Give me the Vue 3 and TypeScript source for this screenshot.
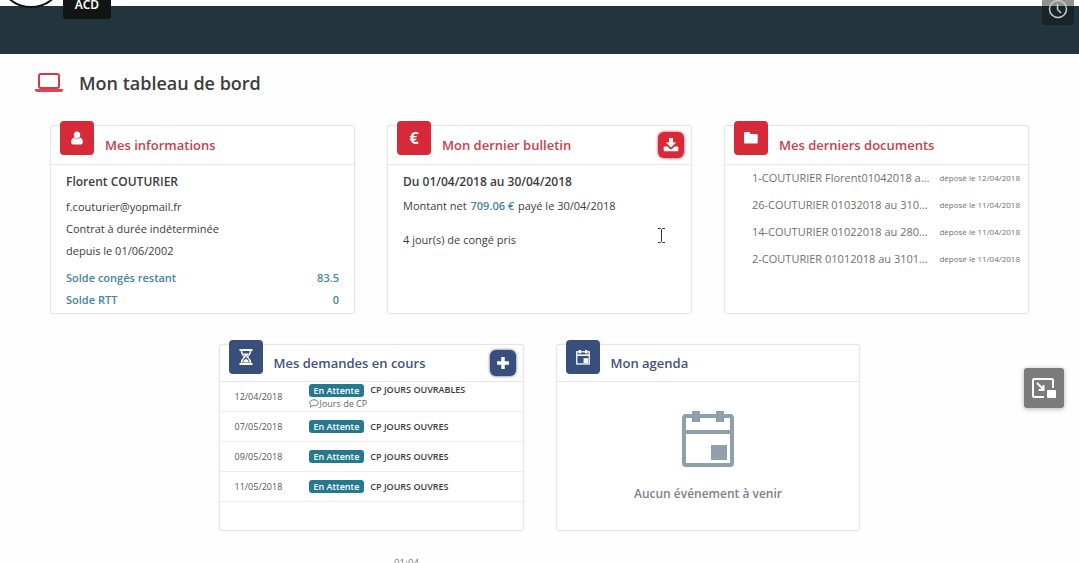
<script setup lang="ts">
interface DocumentRow {
  name: string
  date: string
}

interface RequestRow {
  date: string
  status: string
  label: string
  note?: string
}

const documents: DocumentRow[] = [
  { name: '1-COUTURIER Florent01042018 a...', date: '12/04/2018' },
  { name: '26-COUTURIER 01032018 au 310...', date: '11/04/2018' },
  { name: '14-COUTURIER 01022018 au 280...', date: '11/04/2018' },
  { name: '2-COUTURIER 01012018 au 3101...', date: '11/04/2018' },
]

const requests: RequestRow[] = [
  { date: '12/04/2018', status: 'En Attente', label: 'CP JOURS OUVRABLES', note: 'Jours de CP' },
  { date: '07/05/2018', status: 'En Attente', label: 'CP JOURS OUVRES' },
  { date: '09/05/2018', status: 'En Attente', label: 'CP JOURS OUVRES' },
  { date: '11/05/2018', status: 'En Attente', label: 'CP JOURS OUVRES' },
]
</script>

<template>
  <div class="page">
    <header class="topbar"></header>

    <svg class="avatar" viewBox="0 0 68 68" aria-hidden="true">
      <circle cx="34" cy="34" r="33" fill="#fff" stroke="#111" stroke-width="2" />
    </svg>
    <span class="tag">ACD</span>
    <button class="clock" type="button" aria-label="À regarder plus tard">
      <svg viewBox="0 0 20 20" width="20" height="20" fill="none" stroke="currentColor" stroke-width="1.5">
        <circle cx="10" cy="10" r="8.5" />
        <path d="M9.5 5v5.5l3.5 3.5" />
      </svg>
    </button>

    <main class="content">
      <h1 class="heading">
        <svg class="laptop" viewBox="0 0 28 20" width="28" height="20" aria-hidden="true">
          <rect x="4" y="1" width="20" height="14" rx="2" fill="none" stroke="#d23a46" stroke-width="2" />
          <path d="M0 16h28v1a2 2 0 0 1-2 2H2a2 2 0 0 1-2-2z" fill="#dc4650" />
        </svg>
        Mon tableau de bord
      </h1>

      <div class="cards">
        <section class="card red">
          <header class="card-head">
            <span class="badge">
              <svg viewBox="0 0 14 14" width="14" height="14" fill="#fff" aria-hidden="true">
                <path d="M7 0.5c2 0 3.2 1.5 3.200 3.400S8.900 7.800 7 7.800 3.800 5.800 3.800 3.900 5 .5 7 .5z" />
                <path d="M3.900 6.500C2 7 1.200 9 1.200 11.200c0 1.400.8 2.200 2 2.200h7.600c1.200 0 2-.8 2-2.200 0-2.200-.8-4.200-2.700-4.700-.8 1.100-1.900 1.700-3.100 1.700S4.700 7.600 3.900 6.500z" />
              </svg>
            </span>
            <h2>Mes informations</h2>
          </header>
          <div class="card-body info">
            <p class="strong">Florent COUTURIER</p>
            <p>f.couturier@yopmail.fr</p>
            <p>Contrat à durée indéterminée</p>
            <p>depuis le 01/06/2002</p>
            <dl class="balances">
              <div><dt>Solde congés restant</dt><dd>83.5</dd></div>
              <div><dt>Solde RTT</dt><dd>0</dd></div>
            </dl>
          </div>
        </section>

        <section class="card red">
          <header class="card-head">
            <span class="badge euro">€</span>
            <h2>Mon dernier bulletin</h2>
            <button class="action" type="button" aria-label="Télécharger le bulletin">
              <svg viewBox="0 0 16 16" width="16" height="16" fill="#fff">
                <path d="M6 1h4v4.500h3.200L8 10.500 2.800 5.500H6z" />
                <path d="M1.500 9.500h3L7 11.900c.6.5 1.400.5 2 0l2.500-2.400h3a.8.8 0 0 1 .8.8v3a.9.900 0 0 1-.8.9h-13a.9.900 0 0 1-.8-.9v-3a.8.8 0 0 1 .8-.8z" />
              </svg>
            </button>
          </header>
          <div class="card-body slip">
            <p class="strong">Du 01/04/2018 au 30/04/2018</p>
            <p class="net">Montant net <b>709.06 €</b> payé le 30/04/2018</p>
            <p>4 jour(s) de congé pris</p>
          </div>
        </section>

        <section class="card red">
          <header class="card-head">
            <span class="badge">
              <svg viewBox="0 0 16 14" width="16" height="14" fill="#fff" aria-hidden="true">
                <path d="M2.300 1h3.500c.8 0 1.300.5 1.300 1.300V3h6.300c.8 0 1.300.5 1.300 1.300v6.900c0 .8-.5 1.300-1.300 1.300H2.300c-.8 0-1.300-.5-1.300-1.300V2.300C1 1.500 1.500 1 2.300 1z" />
              </svg>
            </span>
            <h2>Mes derniers documents</h2>
          </header>
          <ul class="documents">
            <li v-for="doc in documents" :key="doc.name">
              <a href="#">{{ doc.name }}</a>
              <small>déposé le {{ doc.date }}</small>
            </li>
          </ul>
        </section>

        <section class="card blue">
          <header class="card-head">
            <span class="badge">
              <svg viewBox="0 0 14 16" width="14" height="16" fill="none" stroke="#fff" aria-hidden="true">
                <path d="M0.500 1h13M0.500 15h13" stroke-width="2" />
                <path d="M2.500 2c0 3.500 1.500 4.500 3.300 6-1.800 1.500-3.300 2.500-3.300 6M11.500 2c0 3.500-1.500 4.500-3.300 6 1.800 1.500 3.300 2.500 3.300 6" stroke-width="1.500" />
                <path d="M4 4.500h6L7 8zM4 13.500c.3-2 1.500-2.800 3-3.500 1.500.7 2.700 1.500 3 3.500z" fill="#fff" stroke="none" />
              </svg>
            </span>
            <h2>Mes demandes en cours</h2>
            <button class="action" type="button" aria-label="Nouvelle demande">
              <svg viewBox="0 0 12 12" width="12" height="12">
                <path d="M6 0v12M0 6h12" stroke="#fff" stroke-width="3.500" />
              </svg>
            </button>
          </header>
          <table class="requests">
            <tbody>
              <tr v-for="row in requests" :key="row.date">
                <td class="day">{{ row.date }}</td>
                <td>
                  <div class="request"><span class="status">{{ row.status }}</span><strong>{{ row.label }}</strong></div>
                  <div v-if="row.note" class="note">
                    <svg viewBox="0 0 10 9" width="10" height="9" fill="none" stroke="#777" aria-hidden="true">
                      <path d="M5 .8c2.400 0 4.300 1.300 4.300 3S7.400 6.800 5 6.800c-.5 0-.9 0-1.300-.1-.7.7-1.600 1.200-2.600 1.300.5-.6.8-1.200.9-1.900C1.200 5.500.7 4.700.7 3.800c0-1.700 1.900-3 4.300-3z" />
                    </svg>
                    {{ row.note }}
                  </div>
                </td>
              </tr>
            </tbody>
          </table>
        </section>

        <section class="card blue">
          <header class="card-head">
            <span class="badge">
              <svg viewBox="0 0 54 58" width="14" height="15" aria-hidden="true">
                <rect x="3" y="7" width="48" height="47" fill="none" stroke="#fff" stroke-width="5" />
                <path d="M3 20h48" stroke="#fff" stroke-width="6" />
                <path d="M10 0h9v14h-9zM35 0h9v14h-9zM29 32h18v18H29z" fill="#fff" />
              </svg>
            </span>
            <h2>Mon agenda</h2>
          </header>
          <div class="empty">
            <svg viewBox="0 0 54 58" width="54" height="58" aria-hidden="true">
              <rect x="3" y="6" width="48" height="49" rx="2" fill="none" stroke="#90a0ab" stroke-width="4" />
              <path d="M3 22h48" stroke="#90a0ab" stroke-width="4" />
              <path d="M11 1h8v11h-8zM35 1h8v11h-8zM30 35h16v15H30z" fill="#90a0ab" />
            </svg>
            <p>Aucun événement à venir</p>
          </div>
        </section>
      </div>
    </main>

    <button class="pip" type="button" aria-label="Image dans l'image">
      <svg viewBox="0 0 26 22" width="26" height="22" fill="none" stroke="#fff" stroke-width="2">
        <path d="M13 20H3a1 1 0 0 1-1-1V3a1 1 0 0 1 1-1h18a1 1 0 0 1 1 1v8" />
        <path d="M6 6l6 6M12.500 8v5h-5" />
        <rect x="16" y="13" width="9" height="8" rx="1" fill="#fff" stroke="none" />
      </svg>
    </button>
    <svg class="cursor" viewBox="0 0 7 15" width="7" height="15" fill="none" stroke="#333" aria-hidden="true">
      <path d="M0 .5h2.500l1 1 1-1H7M0 14.500h2.500l1-1 1 1H7M3.500 1.500v12" />
    </svg>
    <span class="time">01:04</span>
  </div>
</template>

<style>
body {
  margin: 0;
  background: #fefefe;
}
</style>

<style scoped>
.page {
  position: relative;
  box-sizing: border-box;
  height: 100vh;
  overflow: hidden;
  padding-top: 6px;
  font-family: "Open Sans", "Noto Sans", sans-serif;
  font-size: 11px;
  line-height: 22px;
  color: #3c3c3e;
}

h1,
h2,
p,
ul,
dl,
dd {
  margin: 0;
  padding: 0;
}

button {
  border: 0;
  padding: 0;
  display: flex;
  align-items: center;
  justify-content: center;
}

.topbar {
  height: 48px;
  background: #22343c;
}

.avatar {
  position: absolute;
  top: -60px;
  left: -3px;
  width: 68px;
  height: 68px;
}

.tag {
  position: absolute;
  top: -8px;
  left: 63px;
  width: 48px;
  height: 27px;
  border-radius: 3px;
  background: #111415;
  color: #fff;
  font: 600 12px/26px "Noto Sans", sans-serif;
  text-align: center;
}

.clock {
  position: absolute;
  top: -7px;
  right: 5px;
  width: 32px;
  height: 32px;
  border-radius: 3px;
  background: rgba(15, 15, 15, 0.45);
  color: #c8cccd;
}

.content {
  padding: 16px 50px 0;
}

.heading {
  display: flex;
  align-items: center;
  gap: 16px;
  margin-left: -15px;
  font-size: 18px;
  line-height: 26px;
  font-weight: 600;
}

.cards {
  display: flex;
  flex-wrap: wrap;
  justify-content: center;
  gap: 30px 32px;
  margin-top: 29px;
}

.card {
  box-sizing: border-box;
  flex: 0 0 calc((100% - 64px) / 3);
  border: 1px solid #e4e5e6;
  border-radius: 3px;
  box-shadow: 0 0 2px #eee;
  background: #fff;
}

.red {
  --accent: #d62a39;
  --title: #c9414b;
  min-height: 189px;
}

.blue {
  --accent: #384f7b;
  --title: #46527a;
  min-height: 187px;
}

.card-head {
  display: flex;
  align-items: center;
  box-sizing: border-box;
  height: 39px;
  padding: 0 7px 0 9px;
  border-bottom: 1px solid #e4e5e6;
}

.blue .card-head {
  height: 37px;
}

.card-head h2 {
  flex: 1;
  margin-left: 11px;
  font-size: 13px;
  line-height: 20px;
  font-weight: 600;
  color: var(--title);
}

.badge {
  display: flex;
  align-items: center;
  justify-content: center;
  align-self: flex-start;
  width: 34px;
  height: 34px;
  margin-top: -5px;
  border-radius: 4px;
  background: var(--accent);
  color: #fff;
}

.euro {
  font-size: 16px;
  font-weight: 700;
}

.action {
  width: 26px;
  height: 26px;
  border-radius: 6px;
  background: var(--accent);
  box-shadow: 0 0 3px var(--accent);
}

.card-body {
  padding: 5px 15px 0;
}

.strong {
  font-size: 12px;
  line-height: 24px;
  font-weight: 600;
}

.info .strong {
  margin-bottom: 2px;
}

.balances {
  margin-top: 5px;
  font-weight: 600;
  color: #4484a5;
}

.balances div {
  display: flex;
  justify-content: space-between;
}

.net {
  margin: 1px 0 12px;
}

.net b {
  margin: 0 1px;
  font-weight: 600;
  color: #4484a5;
}

.documents {
  display: flex;
  flex-direction: column;
  gap: 1px;
  padding: 0 8px 0 27px;
  list-style: none;
}

.documents li {
  display: flex;
  justify-content: space-between;
  line-height: 26px;
  color: #707070;
}

.documents a {
  color: inherit;
  text-decoration: none;
}

.documents small {
  font-size: 8px;
}

.requests {
  width: 100%;
  border-collapse: collapse;
  font-size: 9px;
  line-height: 14px;
}

.requests td {
  height: 29px;
  padding: 0;
  border-bottom: 1px solid #eee;
  vertical-align: middle;
}

.requests .day {
  width: 74px;
  padding-left: 15px;
  color: #555;
}

.request {
  display: flex;
  align-items: center;
  gap: 6px;
}

.request strong {
  font-weight: 600;
}

.status {
  padding: 0 5px;
  border-radius: 3px;
  background: #24798f;
  color: #fff;
  font-weight: 600;
  line-height: 13px;
}

.note {
  display: flex;
  align-items: center;
  gap: 1px;
  color: #666;
  line-height: 13px;
}

.empty {
  display: flex;
  flex-direction: column;
  align-items: center;
  gap: 15px;
  padding-top: 28px;
  color: #7b8388;
  font-size: 12px;
  font-weight: 600;
}

.pip {
  position: absolute;
  top: 368px;
  right: 15px;
  width: 40px;
  height: 40px;
  border-radius: 3px;
  background: #7b7b7b;
  box-shadow: 0 1px 5px rgba(0, 0, 0, 0.3);
}

.cursor {
  position: absolute;
  top: 228px;
  left: 658px;
}

.time {
  position: absolute;
  top: 558px;
  left: 394px;
  color: #888;
  font: 10px/12px "Liberation Sans", sans-serif;
}
</style>
